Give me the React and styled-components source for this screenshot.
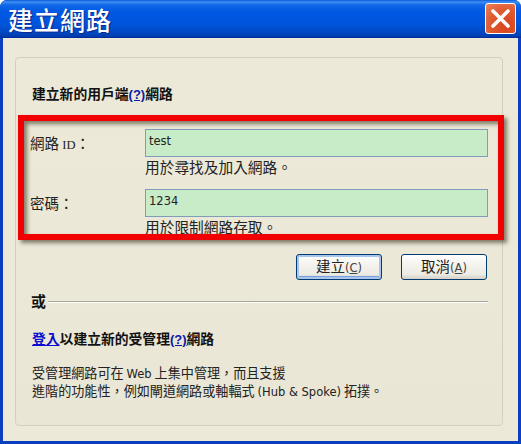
import React from "react";
import styled, { createGlobalStyle } from "styled-components";

const Global = createGlobalStyle`
  html, body { margin: 0; padding: 0; background: #fff; overflow: hidden; }
  #root { width: 521px; height: 444px; }
`;

const FONT = `"Noto Sans CJK TC", "Noto Sans CJK JP", sans-serif`;

const Window = styled.div`
  width: 521px;
  height: 444px;
  box-sizing: border-box;
  display: flex;
  flex-direction: column;
  border-radius: 7px 7px 0 0;
  overflow: hidden;
  background: #0a3fc0;
  font-family: ${FONT};
  color: #111;
`;

const TitleBar = styled.header`
  height: 38px;
  flex: none;
  box-sizing: border-box;
  display: flex;
  align-items: center;
  justify-content: space-between;
  padding: 0 5px 1px 8px;
  background: linear-gradient(
    180deg,
    #0a5ad8 0,
    #3e8ff2 2px,
    #0f67e8 5px,
    #0058e4 12px,
    #0054dc 24px,
    #0048c4 32px,
    #003fb0 36px,
    #00279a 38px
  );
`;

const Title = styled.h1`
  margin: 0;
  font-size: 25px;
  font-weight: 500;
  line-height: 30px;
  letter-spacing: 1px;
  color: #fff;
  text-shadow: 1px 1px 1px #0b2a8c;
`;

const CloseButton = styled.button`
  width: 31px;
  height: 31px;
  padding: 0;
  display: flex;
  align-items: center;
  justify-content: center;
  border: 1px solid #fff;
  border-radius: 3px;
  background: radial-gradient(circle at 70% 75%, #d8431a 0, #e05a30 55%, #e9835f 100%);
`;

const Client = styled.main`
  flex: 1;
  margin: 0 3px 3px;
  box-sizing: border-box;
  padding: 19px 15px 15px 12px;
  background: #ece9d8;
  display: flex;
  min-height: 0;
`;

const Panel = styled.section`
  flex: 1;
  box-sizing: border-box;
  border: 1px solid #d3d0c0;
  border-radius: 4px;
  padding: 26px 14px 0 15px;
  background: linear-gradient(180deg, #ece9d8 0, #ebe8d7 60%, #e9e6d5 100%);
  display: flex;
  flex-direction: column;
`;

const Heading = styled.h2`
  margin: 0 0 0 1px;
  height: 18px;
  font-size: 13.8px;
  line-height: 18px;
  font-weight: 700;
  color: #111;
`;

const Help = styled.a`
  color: #0a1aa8;
  text-decoration: underline;
  font-family: "Liberation Sans", sans-serif;
  font-size: 13px;
`;

const LoginLink = styled.a`
  color: #0a0ad0;
  text-decoration: underline;
`;

const Fields = styled.div`
  position: relative;
  margin-top: 27px;
  display: grid;
  grid-template-columns: 114px 343px;
  row-gap: 0;
`;

const Highlight = styled.div`
  position: absolute;
  left: -13px;
  top: -14px;
  width: 486px;
  height: 125px;
  box-sizing: border-box;
  border: 6px solid #f00000;
  box-shadow: 3px 3px 4px rgba(40, 30, 10, 0.55), inset 3px 3px 4px rgba(40, 30, 10, 0.55);
  pointer-events: none;
`;

const Label = styled.label`
  font-size: 14.5px;
  line-height: 28px;
  height: 28px;
  margin-left: -1px;
  color: #222;
  white-space: nowrap;
`;

const LabelLatin = styled.span`
  font-family: "Liberation Serif", serif;
  font-size: 12.5px;
`;

const Input = styled.div`
  box-sizing: border-box;
  height: 28px;
  border: 1px solid #7f9db9;
  background: #c8ecc8;
  padding-left: 3px;
  font-family: "DejaVu Sans", sans-serif;
  font-size: 11.5px;
  line-height: 23px;
  color: #222;
`;

const Hint = styled.p`
  grid-column: 2;
  margin: 0 0 ${(p) => p.$gap}px;
  font-size: 14.7px;
  line-height: 19px;
  height: ${(p) => p.$h}px;
  overflow: hidden;
  color: #222;
  white-space: nowrap;
`;

const Buttons = styled.div`
  display: flex;
  justify-content: flex-end;
  gap: 19px;
  margin-top: 18px;
  padding-right: 1px;
`;

const Button = styled.button`
  width: 86px;
  height: 26px;
  padding: 0;
  box-sizing: border-box;
  border: 1px solid #003c74;
  border-radius: 3px;
  font-family: ${FONT};
  font-size: 14.5px;
  line-height: 22px;
  color: #222;
  background: linear-gradient(180deg, #fff 0, #f4f3ee 40%, #ecebe4 80%, #d6d0c5 100%);
  box-shadow: ${(p) =>
    p.$primary ? "inset 0 0 0 2px #a9c5ec, inset 0 -1px 0 2px #7a9fdc" : "none"};
`;

const Key = styled.span`
  font-family: "DejaVu Sans", sans-serif;
  font-size: 11.5px;
  color: #444;
`;

const Accel = styled.u`
  text-underline-offset: 1px;
`;

const Divider = styled.div`
  display: flex;
  align-items: center;
  gap: 2px;
  height: 20px;
  margin-top: 11px;
  font-size: 15px;
  font-weight: 700;
  line-height: 20px;
  &::after {
    content: "";
    flex: 1;
    height: 1px;
    background: #a8a698;
    box-shadow: 0 1px 0 #fff;
  }
`;

const SubHeading = styled(Heading)`
  margin-top: 18px;
`;

const Description = styled.div`
  margin: 17px 0 0 1px;
  font-size: 13.1px;
  color: #222;
  white-space: nowrap;
`;

const DescLine = styled.p`
  margin: 0;
  height: 18px;
  line-height: 18px;
`;

const DescLatin = styled.span`
  font-family: "DejaVu Sans", sans-serif;
  font-size: 11.5px;
  line-height: 1;
`;

export default function App() {
  return (
    <>
      <Global />
      <Window>
        <TitleBar>
          <Title>建立網路</Title>
          <CloseButton aria-label="close">
            <svg width="21" height="21" viewBox="0 0 21 21">
              <path d="M3 3 L18 18 M18 3 L3 18" stroke="#fff" strokeWidth="3.6" strokeLinecap="round" />
            </svg>
          </CloseButton>
        </TitleBar>
        <Client>
          <Panel>
            <Heading>
              建立新的用戶端<Help>(?)</Help>網路
            </Heading>
            <Fields>
              <Highlight />
              <Label>
                網路 <LabelLatin>ID</LabelLatin>：
              </Label>
              <Input>test</Input>
              <Hint $h={19} $gap={13}>用於尋找及加入網路。</Hint>
              <Label>密碼：</Label>
              <Input>1234</Input>
              <Hint $h={19} $gap={0}>用於限制網路存取。</Hint>
            </Fields>
            <Buttons>
              <Button $primary>
                建立<Key>(<Accel>C</Accel>)</Key>
              </Button>
              <Button>
                取消<Key>(<Accel>A</Accel>)</Key>
              </Button>
            </Buttons>
            <Divider>或</Divider>
            <SubHeading>
              <LoginLink>登入</LoginLink>以建立新的受管理<Help>(?)</Help>網路
            </SubHeading>
            <Description>
              <DescLine>受管理網路可在 <DescLatin>Web</DescLatin> 上集中管理，而且支援</DescLine>
              <DescLine>進階的功能性，例如閘道網路或軸輻式 <DescLatin>(Hub &amp; Spoke)</DescLatin> 拓撲。</DescLine>
            </Description>
          </Panel>
        </Client>
      </Window>
    </>
  );
}
